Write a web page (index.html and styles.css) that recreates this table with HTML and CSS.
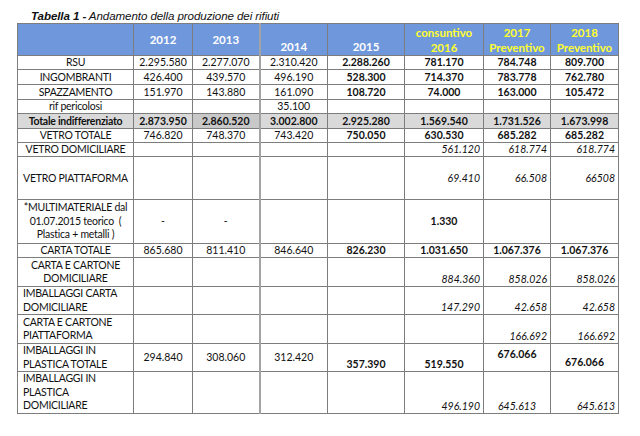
FILE: index.html
```html
<!DOCTYPE html>
<html lang="it">
<head>
<meta charset="utf-8">
<title>Tabella 1</title>
<link rel="stylesheet" href="styles.css">
</head>
<body>
<div class="page">
  <p class="title"><b>Tabella 1 -</b> Andamento della produzione dei rifiuti</p>
  <table class="grid">
    <colgroup>
      <col class="c-lab"><col class="c-12"><col class="c-13"><col class="c-14"><col class="c-15"><col class="c-16"><col class="c-17"><col class="c-18">
    </colgroup>
    <thead>
      <tr class="h-row">
        <th></th>
        <th class="yr">2012</th>
        <th class="yr thick">2013</th>
        <th class="yr bot">2014</th>
        <th class="yr bot">2015</th>
        <th class="yl">consuntivo<br>2016</th>
        <th class="yl">2017<br>Preventivo</th>
        <th class="yl">2018<br>Preventivo</th>
      </tr>
    </thead>
    <tbody>
      <tr class="r14">
        <td class="lab">RSU</td><td>2.295.580</td><td class="thick">2.277.070</td><td>2.310.420</td><td class="b">2.288.260</td><td class="b">781.170</td><td class="b">784.748</td><td class="b">809.700</td>
      </tr>
      <tr class="r15">
        <td class="lab">INGOMBRANTI</td><td>426.400</td><td class="thick">439.570</td><td>496.190</td><td class="b">528.300</td><td class="b">714.370</td><td class="b">783.778</td><td class="b">762.780</td>
      </tr>
      <tr class="r15">
        <td class="lab">SPAZZAMENTO</td><td>151.970</td><td class="thick">143.880</td><td>161.090</td><td class="b">108.720</td><td class="b">74.000</td><td class="b">163.000</td><td class="b">105.472</td>
      </tr>
      <tr class="r14">
        <td class="lab">rif pericolosi</td><td></td><td class="thick"></td><td>35.100</td><td></td><td></td><td></td><td></td>
      </tr>
      <tr class="r15 tot">
        <td class="lab b">Totale indifferenziato</td><td class="b">2.873.950</td><td class="b thick dark">2.860.520</td><td class="b">3.002.800</td><td class="b">2.925.280</td><td class="b">1.569.540</td><td class="b">1.731.526</td><td class="b">1.673.998</td>
      </tr>
      <tr class="r14">
        <td class="lab">VETRO TOTALE</td><td>746.820</td><td class="thick">748.370</td><td>743.420</td><td class="b">750.050</td><td class="b">630.530</td><td class="b">685.282</td><td class="b">685.282</td>
      </tr>
      <tr class="r14">
        <td class="lab">VETRO DOMICILIARE</td><td></td><td class="thick"></td><td></td><td></td><td class="it">561.120</td><td class="it">618.774</td><td class="it">618.774</td>
      </tr>
      <tr class="r43">
        <td class="lab">VETRO PIATTAFORMA</td><td></td><td class="thick"></td><td></td><td></td><td class="it">69.410</td><td class="it">66.508</td><td class="it">66508</td>
      </tr>
      <tr class="r44">
        <td class="lab ml">*MULTIMATERIALE dal<br>01.07.2015 teorico &nbsp;(<br>Plastica + metalli )</td><td>-</td><td class="thick">-</td><td></td><td></td><td class="b">1.330</td><td></td><td></td>
      </tr>
      <tr class="r14">
        <td class="lab">CARTA TOTALE</td><td>865.680</td><td class="thick">811.410</td><td>846.640</td><td class="b">826.230</td><td class="b">1.031.650</td><td class="b">1.067.376</td><td class="b">1.067.376</td>
      </tr>
      <tr class="r29">
        <td class="lab ml">CARTA E CARTONE<br>DOMICILIARE</td><td></td><td class="thick"></td><td></td><td></td><td class="it bot">884.360</td><td class="it bot">858.026</td><td class="it bot">858.026</td>
      </tr>
      <tr class="r28">
        <td class="lab ml left">IMBALLAGGI CARTA<br>DOMICILIARE</td><td></td><td class="thick"></td><td></td><td></td><td class="it bot">147.290</td><td class="it bot">42.658</td><td class="it bot">42.658</td>
      </tr>
      <tr class="r29">
        <td class="lab ml left">CARTA E CARTONE<br>PIATTAFORMA</td><td></td><td class="thick"></td><td></td><td></td><td></td><td class="it bot">166.692</td><td class="it bot">166.692</td>
      </tr>
      <tr class="r28">
        <td class="lab ml left">IMBALLAGGI IN<br>PLASTICA TOTALE</td><td>294.840</td><td class="thick">308.060</td><td>312.420</td><td class="b bot">357.390</td><td class="b bot">519.550</td><td class="b top">676.066</td><td class="b lowmid">676.066</td>
      </tr>
      <tr class="r42">
        <td class="lab ml left">IMBALLAGGI IN<br>PLASTICA<br>DOMICILIARE</td><td></td><td class="thick"></td><td></td><td></td><td class="it bot">496.190</td><td class="it2 bot">645.613</td><td class="it bot">645.613</td>
      </tr>
    </tbody>
  </table>
</div>
</body>
</html>
```

FILE: styles.css
```css
html, body {
  margin: 0;
  padding: 0;
  background: #ffffff;
}

.page {
  width: 640px;
  height: 436px;
  padding: 9px 0 0 17px;
  box-sizing: border-box;
  overflow: hidden;
}

.title {
  margin: 0 0 0 14px;
  font-family: "Liberation Sans", Arial, sans-serif;
  font-style: italic;
  font-size: 11.6px;
  line-height: 13px;
  height: 14px;
  color: #111;
  letter-spacing: -0.1px;
}

.title b {
  font-weight: bold;
}

.grid {
  border-collapse: collapse;
  table-layout: fixed;
  width: 601px;
  font-family: Lato, "Liberation Sans", sans-serif;
  font-size: 10.5px;
  line-height: 13px;
  color: #111;
}

.c-lab { width: 116px; }
.c-12 { width: 59px; }
.c-13 { width: 67px; }
.c-14 { width: 68px; }
.c-15 { width: 77px; }
.c-16 { width: 79px; }
.c-17 { width: 67px; }
.c-18 { width: 68px; }

.grid th,
.grid td {
  border: 1px solid #7d7d7d;
  padding: 0 3px;
  text-align: center;
  vertical-align: middle;
  overflow: hidden;
  white-space: nowrap;
}

.grid .thick {
  border-right: 2px solid #a3a3a3;
}

.h-row {
  height: 32px;
}

.h-row th {
  background: #6f97dc;
  font-weight: bold;
  font-size: 11.5px;
  line-height: 15px;
  color: #ffffff;
}

.h-row th.bot {
  vertical-align: bottom;
  padding-bottom: 1px;
}

.h-row th.yl {
  color: #ffff2e;
}

.r14 { height: 14px; }
.r15 { height: 15px; }
.r28 { height: 28px; }
.r29 { height: 29px; }
.r42 { height: 42px; }
.r43 { height: 43px; }
.r44 { height: 44px; }

.grid .lab {
  text-align: center;
  padding: 0 1px;
  letter-spacing: -0.25px;
}

.grid .lab.ml {
  line-height: 13.5px;
}

.grid .lab.left {
  text-align: left;
  padding-left: 5px;
}

.grid .b {
  font-weight: bold;
}

.grid .it {
  font-style: italic;
  text-align: right;
  padding-right: 3px;
}

.grid .it2 {
  font-style: italic;
  text-align: center;
}

.grid .bot {
  vertical-align: bottom;
  padding-bottom: 0;
}

.grid .top {
  vertical-align: top;
  padding-top: 4px;
}

.grid .lowmid {
  vertical-align: bottom;
  padding-bottom: 2px;
}

.tot td {
  background: #d9d9d9;
}

.tot td.dark {
  background: #c8c8c8;
}
```
